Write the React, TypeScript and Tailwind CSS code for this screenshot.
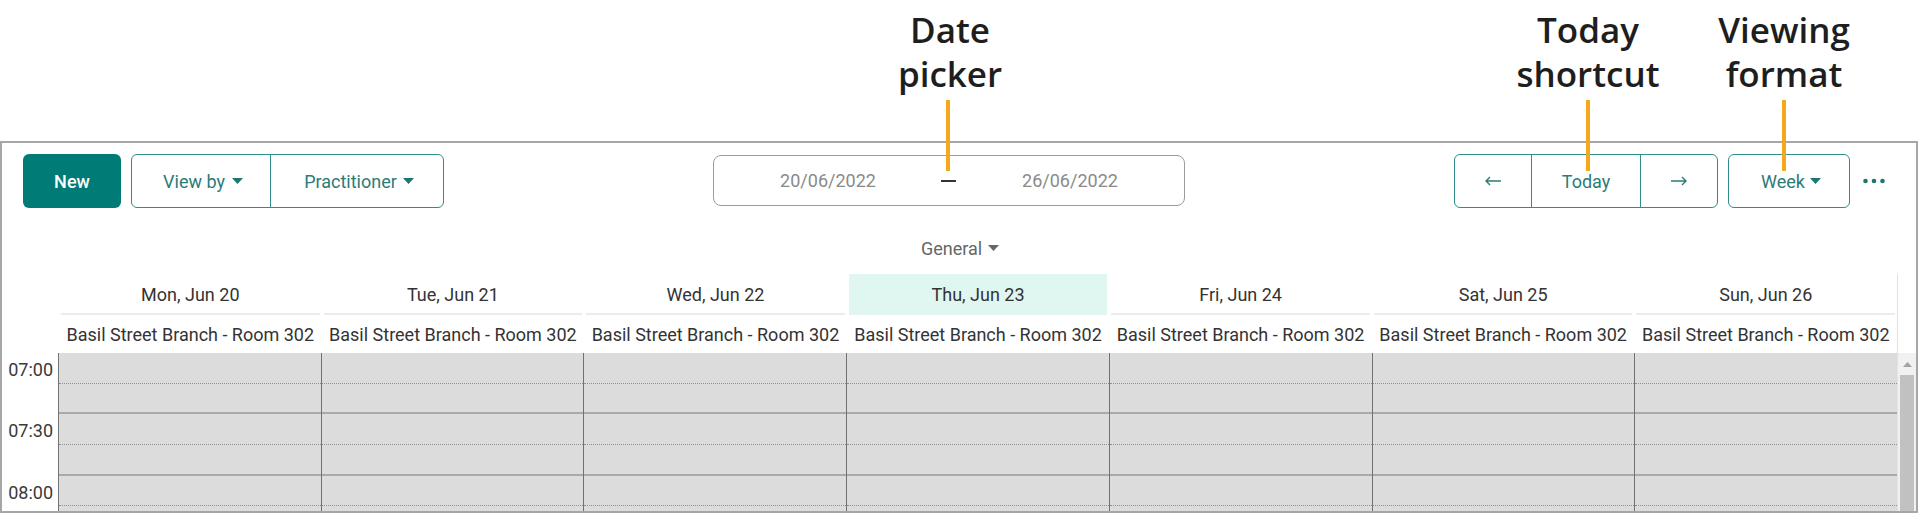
import React from "react";

function Caret({ className }: { className?: string }) {
  return (
    <svg width="11" height="6" viewBox="0 0 11 6" className={className}>
      <path d="M0 0h11L5.5 6z" fill="currentColor" />
    </svg>
  );
}

function ArrowLeft() {
  return (
    <svg width="16" height="10" viewBox="0 0 16 10" fill="none" stroke="currentColor" strokeWidth="1.4">
      <path d="M1 5h15M5 1L1 5l4 4" />
    </svg>
  );
}

function ArrowRight() {
  return (
    <svg width="16" height="10" viewBox="0 0 16 10" fill="none" stroke="currentColor" strokeWidth="1.4">
      <path d="M0 5h15M11 1l4 4-4 4" />
    </svg>
  );
}

const days = [
  "Mon, Jun 20",
  "Tue, Jun 21",
  "Wed, Jun 22",
  "Thu, Jun 23",
  "Fri, Jun 24",
  "Sat, Jun 25",
  "Sun, Jun 26",
];

const times = ["07:00", "07:30", "08:00"];

function Note({ left, lines }: { left: string; lines: string[] }) {
  return (
    <div
      className={`absolute top-[8px] w-[200px] text-center font-['Open_Sans',sans-serif] font-semibold text-[35px] text-[#1e1e1e] ${left}`}
    >
      <div className="h-[44px] leading-[44px]">{lines[0]}</div>
      <div className="h-[44px] leading-[44px]">{lines[1]}</div>
    </div>
  );
}

export default function App() {
  return (
    <div className="relative w-[1918px] h-[513px] overflow-hidden bg-white font-['Roboto',sans-serif] text-[#333]">
      {/* annotations */}
      <Note left="left-[850px]" lines={["Date", "picker"]} />
      <Note left="left-[1488px]" lines={["Today", "shortcut"]} />
      <Note left="left-[1684px]" lines={["Viewing", "format"]} />
      <div className="absolute left-[946px] top-[100px] w-[4px] h-[71px] bg-[#f6a81d] z-10" />
      <div className="absolute left-[1586px] top-[100px] w-[4px] h-[71px] bg-[#f6a81d] z-10" />
      <div className="absolute left-[1782px] top-[100px] w-[4px] h-[71px] bg-[#f6a81d] z-10" />

      <div className="h-[141px]" />
      <div className="h-[372px] border-2 border-[#a6a6a6] flex flex-col">
        {/* toolbar */}
        <div className="flex items-start pt-[11px] pl-[21px] h-[65px] shrink-0">
          <button className="w-[98px] h-[54px] rounded-[6px] bg-[#007b76] text-white text-[18px] font-medium flex items-center justify-center">
            New
          </button>
          <div className="ml-[10px] w-[313px] h-[54px] flex rounded-[6px] border-[1.5px] border-[#2e8e89] text-[#2c7b78] text-[18px]">
            <div className="w-[139px] border-r-[1.5px] border-[#2e8e89] flex items-center justify-center gap-[7px] pl-[4px]">
              <span>View by</span>
              <Caret className="text-[#1d7672]" />
            </div>
            <div className="flex-1 flex items-center justify-center gap-[6px] pl-[4px]">
              <span>Practitioner</span>
              <Caret className="text-[#1d7672]" />
            </div>
          </div>
          <div className="ml-[269px] mt-[1px] w-[472px] h-[51px] rounded-[8px] border border-[#9c9c9c] flex items-center text-[18px] text-[#8a8a8a]">
            <div className="w-[228px] text-center pl-[1px]">20/06/2022</div>
            <div className="w-[15px] h-[2px] bg-[#333]" />
            <div className="w-[229px] text-center">26/06/2022</div>
          </div>
          <div className="ml-[269px] w-[264px] h-[54px] flex rounded-[6px] border-[1.5px] border-[#2e8e89] text-[#2c7b78] text-[18px]">
            <div className="w-[77px] border-r-[1.5px] border-[#2e8e89] flex items-center justify-center">
              <ArrowLeft />
            </div>
            <div className="w-[109px] border-r-[1.5px] border-[#2e8e89] flex items-center justify-center">
              Today
            </div>
            <div className="flex-1 flex items-center justify-center">
              <ArrowRight />
            </div>
          </div>
          <div className="ml-[10px] w-[122px] h-[54px] rounded-[6px] border-[1.5px] border-[#2e8e89] text-[#2c7b78] text-[18px] flex items-center justify-center gap-[5px] pl-[4px]">
            <span>Week</span>
            <Caret className="text-[#1d7672]" />
          </div>
          <div className="ml-[13px] h-[54px] flex items-center">
            <svg width="22" height="6" viewBox="0 0 22 6">
              <circle cx="2.5" cy="3" r="2.3" fill="#1d7672" />
              <circle cx="11" cy="3" r="2.3" fill="#1d7672" />
              <circle cx="19.5" cy="3" r="2.3" fill="#1d7672" />
            </svg>
          </div>
        </div>

        {/* general */}
        <div className="h-[66px] shrink-0 flex justify-center pt-[28px]">
          <div className="flex items-center gap-[6px] h-[24px] text-[18px] text-[#666] pl-[2px]">
            <span>General</span>
            <Caret className="text-[#666]" />
          </div>
        </div>

        {/* day header */}
        <div className="flex h-[41px] shrink-0">
          <div className="w-[57px] shrink-0" />
          {days.map((d, i) => (
            <div key={d} className="flex-1 px-[2px]">
              <div className={`h-[41px] flex flex-col ${i === 3 ? "bg-[#e0f7f1]" : ""}`}>
                <div className="h-[39px] flex items-center justify-center pt-[2px] text-[18px] text-[#333]">{d}</div>
                <div className={`h-[2px] ${i === 3 ? "bg-[#e0f7f1]" : "bg-[#ececec]"}`} />
              </div>
            </div>
          ))}
          <div className="w-[19px] shrink-0 border-l border-[#e2e2e2]" />
        </div>

        {/* room row */}
        <div className="flex h-[38px] shrink-0">
          <div className="w-[57px] shrink-0" />
          {days.map((d) => (
            <div key={d} className="flex-1 flex items-center justify-center text-[18px] text-[#333] whitespace-nowrap">
              Basil Street Branch - Room 302
            </div>
          ))}
          <div className="w-[19px] shrink-0 border-l border-[#e2e2e2]" />
        </div>

        {/* body */}
        <div className="flex flex-1 overflow-hidden">
          <div className="w-[57px] shrink-0 bg-white border-r border-[#747474]">
            {times.map((t) => (
              <div key={t} className="h-[61.4px] text-right pr-[5px] pt-[5px] leading-[24px] text-[18px] text-[#3a3a3a]">
                {t}
              </div>
            ))}
          </div>
          {days.map((d, i) => (
            <div
              key={d}
              className={`flex-1 bg-[#dcdcdc] ${i < 6 ? "border-r border-[#6f726f]" : ""}`}
            >
              {[0, 1, 2, 3, 4, 5].map((r) => (
                <div
                  key={r}
                  className={
                    r % 2 === 0
                      ? "h-[30.7px] border-b border-dotted border-[#8f8f8f]"
                      : "h-[30.7px] border-b-2 border-[#a8aaae]"
                  }
                />
              ))}
            </div>
          ))}
          <div className="w-[19px] shrink-0 bg-[#f1f1f1] border-l border-[#e2e2e2] flex flex-col">
            <div className="h-[22px] flex items-center justify-center">
              <svg width="9" height="5" viewBox="0 0 9 5">
                <path d="M0 5L4.5 0L9 5z" fill="#a3a3a3" />
              </svg>
            </div>
            <div className="flex-1 mx-[2px] bg-[#c1c1c1]" />
          </div>
        </div>
      </div>
    </div>
  );
}
